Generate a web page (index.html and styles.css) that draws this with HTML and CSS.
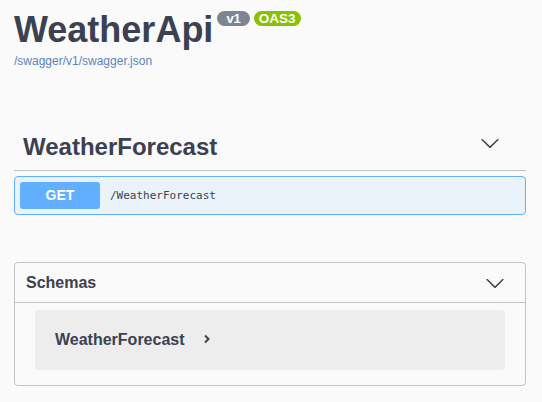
FILE: index.html
```html
<!DOCTYPE html>
<html>
<head>
<meta charset="utf-8">
<link rel="stylesheet" href="styles.css">
</head>
<body>
<div class="page">
  <div class="info">
    <div class="title-row">
      <h1 class="title">WeatherApi</h1>
      <span class="badge badge-version">v1</span>
      <span class="badge badge-oas">OAS3</span>
    </div>
    <a class="url" href="#">/swagger/v1/swagger.json</a>
  </div>

  <div class="tag-section">
    <div class="tag-header">
      <h3 class="tag-title">WeatherForecast</h3>
      <svg class="chev-down tag-chev" viewBox="0 0 20 20" width="20" height="20"><path d="M17.418 6.109c.272-.268.709-.268.979 0s.271.701 0 .969l-7.908 7.83c-.27.268-.707.268-.979 0l-7.908-7.83c-.27-.268-.27-.701 0-.969.271-.268.709-.268.979 0L10 13.25l7.418-7.141z"/></svg>
    </div>
    <div class="opblock">
      <span class="method">GET</span>
      <span class="path">/WeatherForecast</span>
    </div>
  </div>

  <div class="schemas">
    <div class="schemas-header">
      <h4 class="schemas-title">Schemas</h4>
      <svg class="chev-down" viewBox="0 0 20 20" width="20" height="20"><path d="M17.418 6.109c.272-.268.709-.268.979 0s.271.701 0 .969l-7.908 7.83c-.27.268-.707.268-.979 0l-7.908-7.830c-.27-.268-.27-.701 0-.969.271-.268.709-.268.979 0L10 13.25l7.418-7.141z"/></svg>
    </div>
    <div class="schemas-body">
      <div class="model">
        <span class="model-name">WeatherForecast</span>
        <svg class="chev-right" viewBox="0 0 8 10" width="8" height="10"><path d="M2 1.5 L5.5 5 L2 8.5" fill="none" stroke="#3b4151" stroke-width="2"/></svg>
      </div>
    </div>
  </div>
</div>
</body>
</html>
```

FILE: styles.css
```css
html, body {
  margin: 0;
  padding: 0;
  background: #fafafa;
}
body {
  font-family: "Liberation Sans", Arial, sans-serif;
  color: #3b4151;
}
.page {
  padding: 10px 16px 0 14px;
}
.info {
  display: flex;
  flex-direction: column;
  align-items: flex-start;
}
.title-row {
  display: flex;
  align-items: flex-start;
}
.title {
  margin: 0;
  font-size: 36px;
  line-height: 40px;
  font-weight: bold;
  color: #3b4151;
}
.badge {
  margin-top: 1px;
  height: 15px;
  line-height: 15px;
  border-radius: 57px;
  color: #fff;
  font-weight: bold;
  font-size: 13px;
}
.badge-version {
  margin-left: 4px;
  padding: 0 9px;
  background: #7d8492;
}
.badge-oas {
  margin-left: 4px;
  padding: 0 5px;
  font-size: 13.5px;
  background: #89bf04;
}
.url {
  margin-top: 4px;
  font-size: 12px;
  line-height: 14px;
  color: #5b84bd;
  text-decoration: none;
}
.tag-section {
  margin-top: 53px;
}
.tag-header {
  display: flex;
  justify-content: space-between;
  align-items: flex-start;
  padding: 10px 26px 7px 9px;
  border-bottom: 1px solid rgba(59, 65, 81, 0.3);
}
.tag-title {
  margin: 0;
  font-size: 24px;
  line-height: 32px;
  font-weight: bold;
}
.chev-down {
  display: block;
  fill: #3b4151;
}
.tag-chev {
  margin-top: 2px;
}
.opblock {
  display: flex;
  align-items: center;
  margin-top: 5px;
  padding: 5px;
  border: 1px solid #61affe;
  border-radius: 4px;
  background: rgba(97, 175, 254, 0.1);
}
.method {
  width: 80px;
  height: 27px;
  line-height: 27px;
  text-align: center;
  background: #61affe;
  color: #fff;
  font-weight: bold;
  font-size: 14px;
  border-radius: 3px;
}
.path {
  margin-left: 10px;
  font-family: "DejaVu Sans Mono", monospace;
  font-size: 11px;
  color: #3b4151;
}
.schemas {
  margin-top: 47px;
  border: 1px solid rgba(59, 65, 81, 0.3);
  border-radius: 4px;
}
.schemas-header {
  display: flex;
  justify-content: space-between;
  align-items: center;
  padding: 10px 20px 9px 11px;
  border-bottom: 1px solid rgba(59, 65, 81, 0.3);
}
.schemas-title {
  margin: 0;
  font-size: 16px;
  line-height: 20px;
  font-weight: bold;
}
.schemas-body {
  padding: 7px 20px 15px 20px;
}
.model {
  display: flex;
  align-items: center;
  height: 60px;
  padding-left: 20px;
  background: rgba(0, 0, 0, 0.05);
  border-radius: 4px;
}
.model-name {
  font-size: 16px;
  font-weight: bold;
}
.chev-right {
  display: block;
  margin-left: 18px;
  margin-top: -3px;
}
```
